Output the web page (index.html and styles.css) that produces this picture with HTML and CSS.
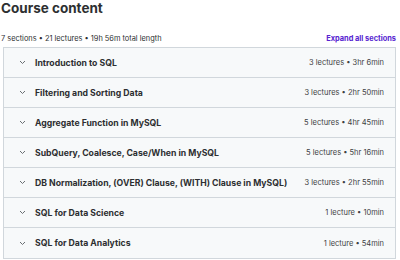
FILE: index.html
```html
<!DOCTYPE html>
<html>
<head>
  <title>Course content</title>
  <meta charset="UTF-8">
  <link rel="stylesheet" href="styles.css">
</head>
<body>
<h2>Course content</h2>

<div class="meta">
  <span>7 sections • 21 lectures • 19h 56m total length</span>
  <a class="expand" href="#">Expand all sections</a>
</div>

<div class="sections">
  <div class="section">
    <span class="chev"><svg width="7" height="5" viewBox="0 0 7 5"><path d="M1 1l2.5 2.5L6 1" fill="none" stroke="#6a6f73" stroke-width="1"/></svg></span>
    <span class="name">Introduction to SQL</span>
    <span class="info">3 lectures • 3hr 6min</span>
  </div>
  <div class="section">
    <span class="chev"><svg width="7" height="5" viewBox="0 0 7 5"><path d="M1 1l2.5 2.5L6 1" fill="none" stroke="#6a6f73" stroke-width="1"/></svg></span>
    <span class="name">Filtering and Sorting Data</span>
    <span class="info">3 lectures • 2hr 50min</span>
  </div>
  <div class="section">
    <span class="chev"><svg width="7" height="5" viewBox="0 0 7 5"><path d="M1 1l2.5 2.5L6 1" fill="none" stroke="#6a6f73" stroke-width="1"/></svg></span>
    <span class="name">Aggregate Function in MySQL</span>
    <span class="info">5 lectures • 4hr 45min</span>
  </div>
  <div class="section">
    <span class="chev"><svg width="7" height="5" viewBox="0 0 7 5"><path d="M1 1l2.5 2.5L6 1" fill="none" stroke="#6a6f73" stroke-width="1"/></svg></span>
    <span class="name">SubQuery, Coalesce, Case/When in MySQL</span>
    <span class="info">5 lectures • 5hr 16min</span>
  </div>
  <div class="section">
    <span class="chev"><svg width="7" height="5" viewBox="0 0 7 5"><path d="M1 1l2.5 2.5L6 1" fill="none" stroke="#6a6f73" stroke-width="1"/></svg></span>
    <span class="name">DB Normalization, (OVER) Clause, (WITH) Clause in MySQL)</span>
    <span class="info">3 lectures • 2hr 55min</span>
  </div>
  <div class="section">
    <span class="chev"><svg width="7" height="5" viewBox="0 0 7 5"><path d="M1 1l2.5 2.5L6 1" fill="none" stroke="#6a6f73" stroke-width="1"/></svg></span>
    <span class="name">SQL for Data Science</span>
    <span class="info">1 lecture • 10min</span>
  </div>
  <div class="section">
    <span class="chev"><svg width="7" height="5" viewBox="0 0 7 5"><path d="M1 1l2.5 2.5L6 1" fill="none" stroke="#6a6f73" stroke-width="1"/></svg></span>
    <span class="name">SQL for Data Analytics</span>
    <span class="info">1 lecture • 54min</span>
  </div>
</div>

</body>
</html>
```

FILE: styles.css
```css
body {
  font-family: Inter, "Noto Sans", sans-serif; background: #fff; color: #2d2f31;
  margin: 0; padding: 0 4px 0 3px;
}
h2 { font-size: 13.5px; font-weight: 700; margin: 0; padding-top: 0; line-height: 16px; margin-left: -2px; }
.meta {
  display: flex; justify-content: space-between; align-items: center;
  font-size: 7.4px; margin-top: 16px; height: 12px; margin-bottom: 3px;
  margin-left: -2px;
}
.expand { color: #5624d0; font-weight: 700; text-decoration: none; }
.sections { border: 1px solid #d1d7dc; }
.section {
  display: flex; align-items: center; height: 29px;
  background: #f7f9fa; border-bottom: 1px solid #d1d7dc;
  padding: 0 11px 0 15px;
}
.section:last-child { border-bottom: none; height: 30px; }
.chev { width: 16px; display: flex; align-items: center; }
.name { font-size: 8.7px; font-weight: 700; flex: 1; }
.info { font-size: 7.5px; color: #3e4143; }
```
